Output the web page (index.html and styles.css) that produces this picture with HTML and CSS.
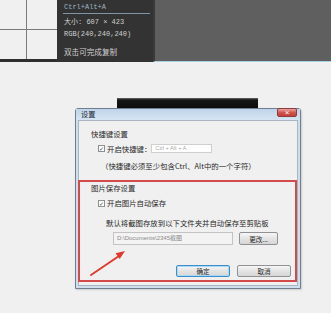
FILE: index.html
```html
<!DOCTYPE html>
<html lang="zh-CN">

<head>
    <meta charset="UTF-8">
    <meta name="viewport" content="width=device-width, initial-scale=1.0">
    <title>设置</title>
    <link rel="stylesheet" href="styles.css">
</head>

<body>
    <div class="capture">
        <div class="grid"><span></span><span></span><span></span><span></span></div>
        <div class="tip">
            <div class="tip-key">Ctrl+Alt+A</div>
            <div class="tip-line first">大小: 607 × 423</div>
            <div class="tip-line">RGB(240,240,240)</div>
            <div class="tip-hint">双击可完成复制</div>
        </div>
        <div class="shade"></div>
    </div>

    <div class="desktop">
        <div class="window-bar"></div>

        <div class="dialog">
            <div class="titlebar">
                <span class="title">设置</span>
                <span class="close">×</span>
            </div>
            <div class="dialog-body">
                <div class="group-title">快捷键设置</div>
                <div class="row hotkey-row">
                    <span class="check">✓</span>
                    <span class="label">开启快捷键：</span>
                    <span class="field hotkey">Ctrl + Alt + A</span>
                </div>
                <div class="hint">（快捷键必须至少包含Ctrl、Alt中的一个字符）</div>

                <div class="save-box">
                    <div class="group-title">图片保存设置</div>
                    <div class="row auto-row">
                        <span class="check">✓</span>
                        <span class="label">开启图片自动保存</span>
                    </div>
                    <div class="desc">默认将截图存放到以下文件夹并自动保存至剪贴板</div>
                    <div class="row path-row">
                        <span class="field path">D:\Documents\2345截图</span>
                        <button class="btn change">更改...</button>
                    </div>
                    <div class="actions">
                        <button class="btn primary">确定</button>
                        <button class="btn">取消</button>
                    </div>
                </div>
            </div>
        </div>

        <!-- 标注箭头 -->
        <svg class="arrow" width="44" height="32" viewBox="0 0 44 32">
            <line x1="5" y1="27" x2="33" y2="8" stroke="#e23a2e" stroke-width="2" stroke-linecap="round" />
            <polygon points="39,3 33.7,11 29.6,5.3" fill="#e23a2e" />
        </svg>
    </div>
</body>

</html>
```

FILE: styles.css
```css
* {
    margin: 0;
    padding: 0;
    box-sizing: border-box;
}

body {
    width: 331px;
    height: 313px;
    overflow: hidden;
    background: #f0f0f0;
    font-family: "Noto Sans CJK SC", "Liberation Sans", sans-serif;
    color: #2a2a2a;
}

/* 顶部截图工具区域 */
.capture {
    display: flex;
    height: 62px;
}

.grid {
    width: 57px;
    display: grid;
    grid-template-columns: 26px 30px;
    grid-template-rows: 29px 29px;
    gap: 1px;
    background: #7a7a7a;
    border-bottom: 3px solid #2f2f2f;
}

.grid span {
    background: #f0f0f0;
}

.tip {
    width: 96px;
    background: #333;
    padding: 2px 3px 0 7px;
    font-family: "Liberation Mono", "Noto Sans CJK SC", monospace;
    font-size: 7px;
    line-height: 10px;
    color: #d0d0d0;
}

.tip-key {
    color: #9fb4c4;
    padding-bottom: 1px;
    border-bottom: 1px solid #7f95a5;
    margin-left: -1px;
    padding-left: 1px;
}

.tip-line {
    margin-top: 2px;
}

.tip-line.first {
    margin-top: 3px;
}

.tip-hint {
    margin-top: 8px;
    font-family: "Noto Sans CJK SC", sans-serif;
    font-size: 7.6px;
}

.shade {
    flex: 1;
    height: 62px;
    background: #5f5f5f;
    border-left: 2px solid #3a3a3a;
    border-bottom: 1px solid #a9d0e0;
}

/* 桌面 */
.desktop {
    position: relative;
    height: 251px;
    background: #f0f0f0;
}

.window-bar {
    position: absolute;
    left: 117px;
    top: 36px;
    width: 141px;
    height: 10px;
    background: linear-gradient(#6a6a6a, #151515 2px, #0d0d0d);
}

.dialog {
    position: absolute;
    left: 75px;
    top: 46px;
    width: 226px;
    height: 181px;
    display: flex;
    flex-direction: column;
    background: #cfdeec;
    border: 1px solid #6f7f8e;
    border-radius: 3px 3px 0 0;
    box-shadow: 1px 1px 2px rgba(0, 0, 0, 0.15);
}

.titlebar {
    height: 11px;
    display: flex;
    justify-content: space-between;
    align-items: flex-start;
    padding-left: 5px;
    background: linear-gradient(#bfd4ea, #d6e4f2);
}

.title {
    font-size: 7.2px;
    line-height: 11px;
    color: #1e2a36;
}

.close {
    width: 20px;
    height: 9px;
    margin-top: -1px;
    margin-right: 3px;
    border: 1px solid #8d3b3b;
    border-radius: 2px;
    background: linear-gradient(#eba3a0, #d0504b 55%, #c7403b);
    color: #fff;
    font-family: "Liberation Sans", sans-serif;
    font-size: 8px;
    line-height: 7px;
    text-align: center;
}

.dialog-body {
    flex: 1;
    margin: 0 2px 2px;
    background: #f0f0f0;
    border: 1px solid #a9b6c2;
    padding-bottom: 3px;
    font-size: 7.4px;
}

.group-title {
    line-height: 10px;
    margin-top: 8px;
    padding-left: 12px;
}

.row {
    display: flex;
    align-items: center;
}

.check {
    width: 7px;
    height: 7px;
    border: 1px solid #8e8f8f;
    background: #fdfdfd;
    color: #2c4a6e;
    font-family: "DejaVu Sans", sans-serif;
    font-size: 6px;
    line-height: 5px;
    text-align: center;
}

.label {
    line-height: 10px;
    margin-left: 2px;
}

.field {
    height: 9px;
    background: #fff;
    border: 1px solid #cfcfcf;
    color: #a8a8a8;
    font-family: "Liberation Sans", sans-serif;
    font-size: 5.6px;
    line-height: 7px;
    padding-left: 3px;
    white-space: nowrap;
}

.hotkey-row {
    height: 9px;
    margin-top: 5px;
    padding-left: 19px;
}

.hotkey {
    width: 61px;
}

.hint {
    line-height: 10px;
    margin-top: 8px;
    padding-left: 22px;
}

.save-box {
    margin: 9px 0 0 -1px;
    border: 2px solid #d24a4c;
    padding-bottom: 3px;
}

.save-box .group-title {
    margin-top: 1px;
    padding-left: 11px;
}

.auto-row {
    height: 10px;
    margin-top: 5px;
    padding-left: 18px;
}

.desc {
    line-height: 10px;
    margin-top: 10px;
    padding-left: 26px;
}

.path-row {
    height: 13px;
    margin-top: 4px;
    padding-left: 33px;
    gap: 6px;
}

.path {
    width: 120px;
    height: 13px;
    line-height: 11px;
    background: #f3f3f3;
    border-color: #c3c3c3;
    color: #8a8a8a;
    font-size: 6px;
}

.btn {
    height: 13px;
    border: 1px solid #8f9194;
    border-radius: 2px;
    background: linear-gradient(#f6f6f6, #e4e4e4 50%, #d6d6d6);
    font-family: "Noto Sans CJK SC", sans-serif;
    font-size: 6.6px;
    line-height: 10px;
    color: #2a2a2a;
}

.change {
    width: 39px;
}

.actions {
    display: flex;
    justify-content: flex-end;
    gap: 7px;
    margin-top: 20px;
    padding-right: 4px;
}

.actions .btn {
    width: 54px;
    height: 12px;
}

.btn.primary {
    border-color: #3d8ecb;
    box-shadow: inset 0 0 0 1px #a9daf5;
}

.arrow {
    position: absolute;
    left: 86px;
    top: 186px;
}
```
